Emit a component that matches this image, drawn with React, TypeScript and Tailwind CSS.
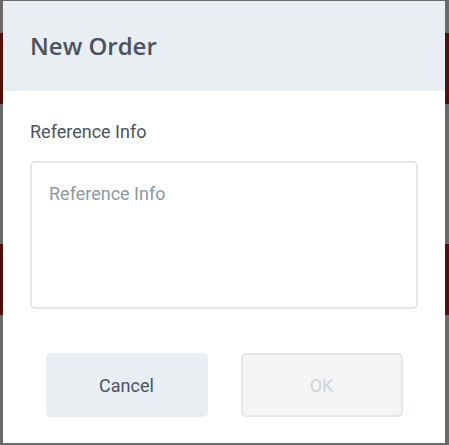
import React from "react";

export default function App() {
  return (
    <div className="relative w-[449px] h-[445px] overflow-hidden bg-[#6a6a6a]" style={{ fontFamily: "Roboto, 'Liberation Sans', sans-serif" }}>
      {/* background page (dimmed) */}
      <div className="flex flex-col">
        <div className="h-[33px]" />
        <div className="h-[71px] bg-[#4d100d]" />
        <div className="h-[140px]" />
        <div className="h-[71px] bg-[#4d100d]" />
      </div>

      {/* modal */}
      <div className="absolute left-[3px] top-[1px] w-[442px] h-[442px] bg-white flex flex-col">
        <div className="h-[90px] bg-[#e9eef2] flex items-center px-[27px]">
          <h1 className="text-[24px] font-semibold text-[#4a5260] leading-none" style={{ fontFamily: "'Open Sans', 'Noto Sans', sans-serif" }}>
            New Order
          </h1>
        </div>
        <div className="px-[27px] pt-[29px] flex flex-col">
          <label className="text-[18px] leading-[24px] text-[#4a5260]">Reference Info</label>
          <div className="mt-[17px] h-[148px] border-2 border-[#e3e7eb] rounded-[5px] pl-[17px] pt-[19px]">
            <span className="text-[18px] leading-[24px] text-[#8d97a1]">Reference Info</span>
          </div>
        </div>
        <div className="flex justify-center gap-[33px] mt-[44px]">
          <button className="w-[162px] h-[64px] rounded-[5px] bg-[#e9eef2] text-[18px] text-[#4a5260]">Cancel</button>
          <button className="w-[162px] h-[64px] rounded-[5px] bg-[#f3f5f7] border-2 border-[#e3e7eb] text-[18px] text-[#cdd3d8]">OK</button>
        </div>
      </div>
    </div>
  );
}
